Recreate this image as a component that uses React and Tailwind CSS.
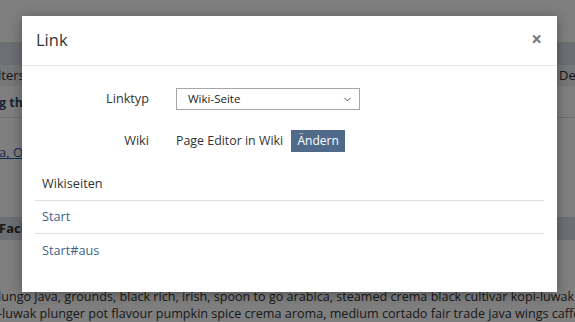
import { ChevronDown } from "lucide-react";

const PAGE_TEXT_1 =
  "lungo java, grounds, black rich, irish, spoon to go arabica, steamed crema black cultivar kopi-luwak";
const PAGE_TEXT_2 =
  "-luwak plunger pot flavour pumpkin spice crema aroma, medium cortado fair trade java wings caffe";

const wikiPages = ["Start", "Start#aus"];

const BackgroundPage = () => (
  <div className="flex h-full w-full flex-col bg-white text-[13px] text-[#333]">
    <div className="h-[42px] shrink-0" />
    <div className="h-[23px] shrink-0 bg-[#d9dee6]" />
    <div className="flex h-[21px] shrink-0 items-center justify-between bg-[#eceef2] whitespace-nowrap">
      <span className="-ml-[12px]">Filters</span>
      <span className="-mr-[40px]">Der Filter</span>
    </div>
    <div className="flex h-[32px] shrink-0 items-center border-b border-[#ddd] whitespace-nowrap">
      <span className="-ml-[1px] pt-[4px] text-[12.5px] font-bold text-[#2f4a6b]">g the list</span>
    </div>
    <div className="flex h-[70px] shrink-0 items-center whitespace-nowrap">
      <span className="-ml-[1px] text-[#2f5c9a] underline">a, Olo</span>
    </div>
    <div className="h-[29px] shrink-0" />
    <div className="flex h-[23px] shrink-0 items-center bg-[#d9dee6] whitespace-nowrap">
      <span className="-ml-[1px] font-bold">Fachbereich</span>
    </div>
    <div className="h-[48px] shrink-0" />
    <div className="flex flex-col whitespace-nowrap text-[12.6px] leading-[17px]">
      <span className="-ml-[2px]">{PAGE_TEXT_1}</span>
      <span className="-ml-[2px]">{PAGE_TEXT_2}</span>
    </div>
  </div>
);

const LinkDialog = () => (
  <div className="absolute left-[22px] top-[16px] flex h-[276px] w-[535px] flex-col bg-white shadow-[0_2px_12px_rgba(0,0,0,0.35)]">
    <div className="flex h-[50px] shrink-0 items-center justify-between border-b border-[#e5e5e5] pl-[14px] pr-[15px]">
      <h2 className="text-[16.5px] leading-none text-[#333]">Link</h2>
      <button
        type="button"
        className="-mt-[3px] text-[19px] font-bold leading-none text-[#7a7a7a]"
      >
        ×
      </button>
    </div>

    <div className="flex flex-col px-[13px] pt-[22px] text-[12.7px]">
      <div className="flex items-center gap-[27px]">
        <label className="w-[114px] text-right text-[#333]">Linktyp</label>
        <div className="flex h-[22px] w-[184px] items-center justify-between border border-[#a6a6a6] bg-white pl-[11px] pr-[6px]">
          <span className="text-[11.5px] text-[#222]">Wiki-Seite</span>
          <ChevronDown size={11} strokeWidth={2} className="text-[#444]" />
        </div>
      </div>

      <div className="mt-[20px] flex items-center gap-[27px]">
        <label className="w-[114px] text-right text-[#333]">Wiki</label>
        <div className="flex items-center gap-[8px]">
          <span className="text-[12.4px] text-[#333]">Page Editor in Wiki</span>
          <button
            type="button"
            className="flex h-[22px] w-[54px] items-center justify-center bg-[#4f6a8b] text-[12px] text-white"
          >
            Ändern
          </button>
        </div>
      </div>

      <div className="mt-[16px] flex flex-col">
        <div className="flex h-[33px] items-center border-b border-[#e0e0e0] px-[7px] text-[#333]">
          Wikiseiten
        </div>
        {wikiPages.map((page, i) => (
          <a
            key={page}
            href="#"
            className={`flex h-[33px] items-center px-[7px] text-[#3d5f89] ${
              i === 0 ? "border-b border-[#e0e0e0]" : ""
            }`}
          >
            {page}
          </a>
        ))}
      </div>
    </div>
  </div>
);

export default function App() {
  return (
    <div
      className="relative h-[322px] w-[575px] overflow-hidden"
      style={{ fontFamily: '"Open Sans", "Noto Sans", sans-serif' }}
    >
      <BackgroundPage />
      <div className="absolute inset-0 bg-black/50" />
      <LinkDialog />
    </div>
  );
}
